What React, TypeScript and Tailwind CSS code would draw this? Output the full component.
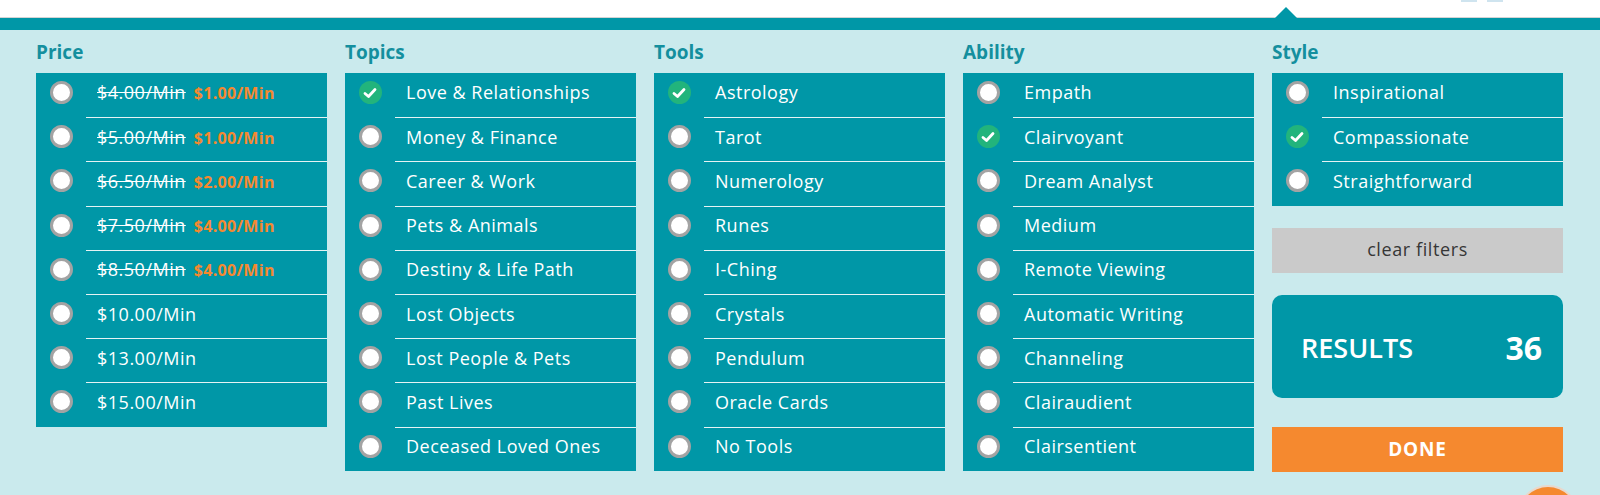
import React from "react";

type Item = { label: string; checked?: boolean; was?: string; now?: string };

const columns: { title: string; items: Item[] }[] = [
  {
    title: "Price",
    items: [
      { label: "", was: "$4.00/Min", now: "$1.00/Min" },
      { label: "", was: "$5.00/Min", now: "$1.00/Min" },
      { label: "", was: "$6.50/Min", now: "$2.00/Min" },
      { label: "", was: "$7.50/Min", now: "$4.00/Min" },
      { label: "", was: "$8.50/Min", now: "$4.00/Min" },
      { label: "$10.00/Min" },
      { label: "$13.00/Min" },
      { label: "$15.00/Min" },
    ],
  },
  {
    title: "Topics",
    items: [
      { label: "Love & Relationships", checked: true },
      { label: "Money & Finance" },
      { label: "Career & Work" },
      { label: "Pets & Animals" },
      { label: "Destiny & Life Path" },
      { label: "Lost Objects" },
      { label: "Lost People & Pets" },
      { label: "Past Lives" },
      { label: "Deceased Loved Ones" },
    ],
  },
  {
    title: "Tools",
    items: [
      { label: "Astrology", checked: true },
      { label: "Tarot" },
      { label: "Numerology" },
      { label: "Runes" },
      { label: "I-Ching" },
      { label: "Crystals" },
      { label: "Pendulum" },
      { label: "Oracle Cards" },
      { label: "No Tools" },
    ],
  },
  {
    title: "Ability",
    items: [
      { label: "Empath" },
      { label: "Clairvoyant", checked: true },
      { label: "Dream Analyst" },
      { label: "Medium" },
      { label: "Remote Viewing" },
      { label: "Automatic Writing" },
      { label: "Channeling" },
      { label: "Clairaudient" },
      { label: "Clairsentient" },
    ],
  },
];

const style: Item[] = [
  { label: "Inspirational" },
  { label: "Compassionate", checked: true },
  { label: "Straightforward" },
];

function Mark({ checked }: { checked?: boolean }) {
  if (checked) {
    return (
      <span className="w-[23px] h-[23px] rounded-full bg-[#22b47c] flex items-center justify-center">
        <svg width="14" height="12" viewBox="0 0 14 12">
          <path d="M2 6.5 L5.5 9.5 L12 2.5" fill="none" stroke="#fff" strokeWidth="2.8" strokeLinecap="round" strokeLinejoin="round" />
        </svg>
      </span>
    );
  }
  return <span className="w-[23px] h-[23px] rounded-full bg-white border-[3px] border-[#a3a3a3]" />;
}

function Row({ item, first }: { item: Item; first: boolean }) {
  return (
    <div className="flex h-[44.2px]">
      <div className="w-[50px] shrink-0 flex items-center justify-center pb-[5px]">
        <Mark checked={item.checked} />
      </div>
      <div className={"flex-1 flex items-center pl-[11px] pb-[5px] " + (first ? "" : "border-t-[1.5px] border-[#e6f3f4]")}>
        {item.was ? (
          <span className="flex items-baseline gap-[8px]">
            <span className="line-through">{item.was}</span>
            <span className="text-[#f5892f] font-bold text-[16px] tracking-[0.3px]">{item.now}</span>
          </span>
        ) : (
          <span>{item.label}</span>
        )}
      </div>
    </div>
  );
}

function Box({ items }: { items: Item[] }) {
  return (
    <div className="bg-[#0097a7] text-white text-[18px] tracking-[0.5px]">
      {items.map((it, i) => (
        <Row key={i} item={it} first={i === 0} />
      ))}
    </div>
  );
}

function Heading({ children }: { children: React.ReactNode }) {
  return <h2 className="h-[43px] pt-[9px] text-[19px] leading-[26px] font-bold text-[#148f9e]">{children}</h2>;
}

export default function App() {
  return (
    <div className="relative h-[495px] overflow-hidden bg-[#caeaed]" style={{ fontFamily: '"Open Sans", "Noto Sans", sans-serif' }}>
      <div className="relative h-[18px] bg-white border-b border-[#d4d4d4]">
        <div className="absolute left-[1461px] top-0 w-[16px] h-[2px] bg-[#cfe4ef]" />
        <div className="absolute left-[1487px] top-0 w-[16px] h-[2px] bg-[#cfe4ef]" />
        <div className="absolute left-[1275px] top-[7px] w-0 h-0 border-l-[11px] border-r-[11px] border-b-[11px] border-l-transparent border-r-transparent border-b-[#0097a7]" />
      </div>
      <div className="h-[12px] bg-[#0097a7]" />
      <div className="flex gap-[18px] pl-[36px]">
        {columns.map((c) => (
          <div key={c.title} className="w-[291px]">
            <Heading>{c.title}</Heading>
            <Box items={c.items} />
          </div>
        ))}
        <div className="w-[291px]">
          <Heading>Style</Heading>
          <Box items={style} />
          <button className="mt-[22px] w-full h-[45px] bg-[#cacaca] text-[#363636] text-[18px] tracking-[0.6px] flex items-center justify-center pb-[2px]">
            clear filters
          </button>
          <div className="mt-[22px] h-[103px] rounded-[10px] bg-[#0097a7] text-white flex items-center justify-between pl-[29px] pr-[21px] pt-[4px]">
            <span className="text-[27px] font-semibold">RESULTS</span>
            <span className="text-[32px] font-bold">36</span>
          </div>
          <button className="mt-[29px] w-full h-[45px] bg-[#f5892f] text-white text-[19px] font-bold tracking-[0.8px] flex items-center justify-center">
            DONE
          </button>
        </div>
      </div>
      <div className="absolute left-[1519px] top-[487px] w-[58px] h-[58px] rounded-full bg-[#f5892f] ring-2 ring-[#e9d8cc]" />
    </div>
  );
}
